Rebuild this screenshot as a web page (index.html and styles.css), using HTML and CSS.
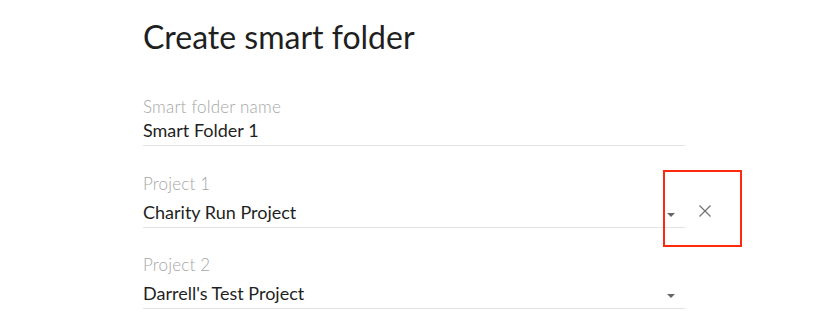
FILE: index.html
```html
<!DOCTYPE html>
<html lang="en">
<head>
<meta charset="utf-8">
<title>Create smart folder</title>
<link rel="stylesheet" href="styles.css">
</head>
<body>
<div class="page">
  <h1 class="title">Create smart folder</h1>
  <div class="field">
    <div class="label">Smart folder name</div>
    <div class="value">Smart Folder 1</div>
  </div>
  <div class="row">
    <div class="field select">
      <div class="label">Project 1</div>
      <div class="value">Charity Run Project<span class="arrow"></span></div>
    </div>
    <div class="remove-box">
      <svg class="x-icon" width="14" height="14" viewBox="0 0 14 14"><path d="M1.5 1.5 L12.5 12.5 M12.5 1.5 L1.5 12.5" stroke="#707070" stroke-width="1.2" fill="none"/></svg>
    </div>
  </div>
  <div class="field select">
    <div class="label">Project 2</div>
    <div class="value">Darrell's Test Project<span class="arrow"></span></div>
  </div>
</div>
</body>
</html>
```
FILE: styles.css
```css
html, body {
  margin: 0;
  padding: 0;
  background: #ffffff;
}
body {
  font-family: Lato, "Open Sans", sans-serif;
  color: #1f1f1f;
}
.page {
  padding-left: 143px;
  width: 542px;
  padding-top: 18px;
}
.title {
  font-size: 32px;
  font-weight: 400;
  line-height: 38px;
  margin: 0 0 41px 0;
  color: #1f1f1f;
}
.field {
  width: 542px;
}
.field + .row {
  margin-top: 28px;
}
.row + .field {
  margin-top: 27px;
}
.label {
  font-size: 17px;
  font-weight: 300;
  letter-spacing: 0.2px;
  line-height: 20px;
  color: #a6a6a6;
}
.value {
  position: relative;
  font-size: 18px;
  line-height: 22px;
  margin-top: 2px;
  padding-bottom: 4px;
  border-bottom: 1px solid #e3e3e3;
  color: #1f1f1f;
}
.select .value {
  margin-top: 7px;
  padding-bottom: 4px;
}
.arrow {
  position: absolute;
  right: 10px;
  top: 12px;
  width: 0;
  height: 0;
  border-left: 4px solid transparent;
  border-right: 4px solid transparent;
  border-top: 4px solid #666666;
}
.row {
  position: relative;
  display: flex;
  align-items: flex-start;
  width: 600px;
}
.remove-box {
  position: absolute;
  left: 520px;
  top: -4px;
  width: 75px;
  height: 73px;
  border: 2px solid #ff2a0e;
  display: flex;
  align-items: center;
  justify-content: center;
}
.x-icon {
  display: block;
  margin-left: 5px;
  margin-top: 4px;
}
```
